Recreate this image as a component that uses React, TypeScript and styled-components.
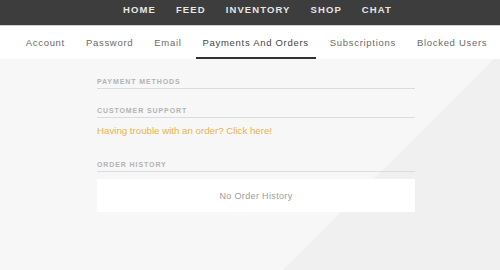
import React from "react";
import styled, { createGlobalStyle } from "styled-components";

const Global = createGlobalStyle`
  html, body { margin: 0; padding: 0; }
  body {
    font-family: "Liberation Sans", Arial, sans-serif;
    width: 500px;
    height: 270px;
    overflow: hidden;
  }
  #root { height: 270px; }
`;

const Page = styled.div`
  display: flex;
  flex-direction: column;
  height: 270px;
`;

const TopNav = styled.nav`
  height: 26px;
  background: #3d3d3d;
  border-bottom: 1px solid #cfcfcf;
  display: flex;
  justify-content: center;
  align-items: flex-start;
  padding: 5px 0 0 15px;
  box-sizing: border-box;
  gap: 20px;
`;

const NavLink = styled.a`
  color: #e6e6e6;
  font-weight: 700;
  font-size: 9.5px;
  letter-spacing: 1.1px;
  line-height: 9px;
  text-transform: uppercase;
  text-decoration: none;
`;

const TabBar = styled.div`
  height: 33px;
  background: #ffffff;
  display: flex;
  justify-content: center;
  align-items: stretch;
  gap: 7px;
  padding-left: 13px;
`;

const Tab = styled.a<{ $active?: boolean }>`
  display: flex;
  align-items: center;
  padding: 1px 7px 0;
  font-size: 9.5px;
  letter-spacing: 0.7px;
  color: ${(p) => (p.$active ? "#444" : "#6a6a6a")};
  border-bottom: 2px solid ${(p) => (p.$active ? "#333" : "transparent")};
  text-decoration: none;
`;

const Main = styled.main`
  flex: 1;
  background: linear-gradient(135deg, #f7f7f7 69.4%, #f0f0f0 69.4%);
  padding: 19px 0 0 97px;
`;

const Column = styled.div`
  width: 318px;
  display: flex;
  flex-direction: column;
`;

const Section = styled.section<{ $gap: number }>`
  display: flex;
  flex-direction: column;
  margin-bottom: ${(p) => p.$gap}px;
`;

const Label = styled.h3`
  margin: 0;
  font-size: 7px;
  line-height: 7px;
  font-weight: 700;
  letter-spacing: 0.9px;
  color: #b3b3b3;
  text-transform: uppercase;
  padding-bottom: 3px;
  border-bottom: 1px solid #dcdcdc;
`;

const SupportLink = styled.a`
  margin-top: 8px;
  font-size: 9.7px;
  line-height: 10px;
  color: #e9b449;
  text-decoration: none;
`;

const EmptyBox = styled.div`
  margin-top: 7px;
  height: 33px;
  background: #ffffff;
  display: flex;
  align-items: center;
  justify-content: center;
  font-size: 9px;
  letter-spacing: 0.35px;
  color: #9c9c9c;
`;

const navItems = ["Home", "Feed", "Inventory", "Shop", "Chat"];
const tabs = [
  "Account",
  "Password",
  "Email",
  "Payments And Orders",
  "Subscriptions",
  "Blocked Users",
];

export default function App() {
  return (
    <Page>
      <Global />
      <TopNav>
        {navItems.map((n) => (
          <NavLink key={n}>{n}</NavLink>
        ))}
      </TopNav>
      <TabBar>
        {tabs.map((t) => (
          <Tab key={t} $active={t === "Payments And Orders"}>
            {t}
          </Tab>
        ))}
      </TabBar>
      <Main>
        <Column>
          <Section $gap={18}>
            <Label>Payment Methods</Label>
          </Section>
          <Section $gap={25}>
            <Label>Customer Support</Label>
            <SupportLink>Having trouble with an order? Click here!</SupportLink>
          </Section>
          <Section $gap={0}>
            <Label>Order History</Label>
            <EmptyBox>No Order History</EmptyBox>
          </Section>
        </Column>
      </Main>
    </Page>
  );
}
